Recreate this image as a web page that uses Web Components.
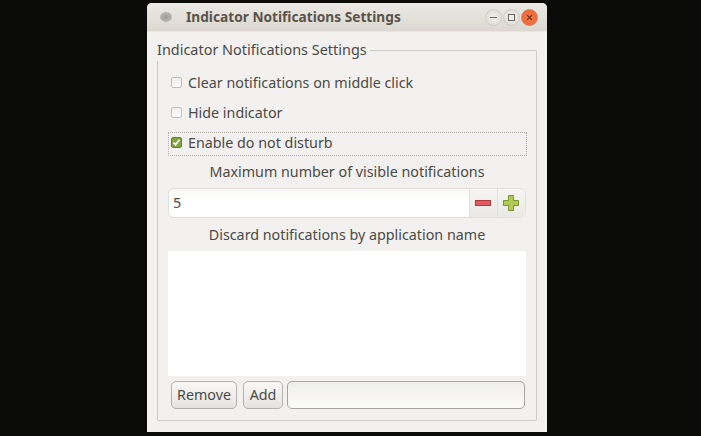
<!DOCTYPE html>
<html>
<head>
<meta charset="utf-8">
<title>Indicator Notifications Settings</title>
<style>
  html, body { margin: 0; height: 100%; overflow: hidden; }
  body {
    background: #0b0b0a;
    font: 14.3px "Noto Sans", sans-serif;
    color: #4c4a45;
    display: flex;
    align-items: flex-start;
    padding: 3px 0 0 147px;
    box-sizing: border-box;
  }
</style>
</head>
<body>
<settings-window heading="Indicator Notifications Settings">
  <group-frame label="Indicator Notifications Settings">
    <check-row>Clear notifications on middle click</check-row>
    <check-row>Hide indicator</check-row>
    <check-row checked focused>Enable do not disturb</check-row>
    <center-label>Maximum number of visible notifications</center-label>
    <spin-entry value="5"></spin-entry>
    <center-label>Discard notifications by application name</center-label>
    <app-list></app-list>
    <action-row></action-row>
  </group-frame>
</settings-window>

<script>
class SettingsWindow extends HTMLElement {
  constructor() {
    super();
    this.attachShadow({ mode: "open" });
    this.shadowRoot.innerHTML = `
      <style>
        :host { display: flex; flex-direction: column; width: 400px; height: 429px;
          background: #f2f1ef; border-radius: 5px 5px 0 0; overflow: hidden; }
        .bar { display: flex; align-items: center; height: 28px; flex: none;
          background: linear-gradient(#ece9e5, #dcd8d1); border-bottom: 1px solid #e8e6e2; }
        .menu { width: 12px; height: 10px; margin: 0 14px 0 13px; border-radius: 50%;
          background: radial-gradient(#a09d98, #c4c1bc); }
        .title { flex: 1; font-weight: 700; font-size: 13.7px; color: #5a534a; padding-bottom: 2px; }
        .btns { display: flex; gap: 1px; margin-right: 9px; }
        .btn { width: 17px; height: 17px; border-radius: 50%; display: flex; align-items: center; justify-content: center;
          border: 1px solid #cfcbc5; box-sizing: border-box; background: radial-gradient(#f1efec, #ddd9d4); }
        .btn.close { background: radial-gradient(#f47d4d, #e9612f); border-color: #d9825f; }
        .btn svg { display: block; }
        .body { flex: 1; display: flex; padding: 9px 10px 11px 10px; min-height: 0; }
      </style>
      <div class="bar">
        <span class="menu"></span>
        <span class="title"></span>
        <div class="btns">
          <span class="btn"><svg width="9" height="9"><path d="M1 4.5h7" stroke="#6b665f" stroke-width="1"/></svg></span>
          <span class="btn"><svg width="9" height="9"><rect x="1.5" y="1.5" width="6" height="6" fill="none" stroke="#6b665f"/></svg></span>
          <span class="btn close"><svg width="9" height="9"><path d="M2 2l5 5M7 2l-5 5" stroke="#7a3015" stroke-width="1.1"/></svg></span>
        </div>
      </div>
      <div class="body"><slot></slot></div>`;
    this.shadowRoot.querySelector(".title").textContent = this.getAttribute("heading");
  }
}
customElements.define("settings-window", SettingsWindow);

class GroupFrame extends HTMLElement {
  constructor() {
    super();
    this.attachShadow({ mode: "open" });
    this.shadowRoot.innerHTML = `
      <style>
        :host { display: flex; flex-direction: column; flex: 1; min-width: 0; }
        .head { display: flex; height: 20px; flex: none; }
        .label { font-size: 14.45px; line-height: 18px; padding-right: 3px; white-space: nowrap; }
        .line { flex: 1; margin-top: 9px; border: 1px solid #cdcbc6; border-bottom: 0; border-left: 0; border-radius: 0 2px 0 0; }
        .inner { flex: 1; display: flex; flex-direction: column; min-height: 0;
          border: 1px solid #cdcbc6; border-top: 0; border-radius: 0 0 2px 2px;
          padding: 11px 10px 11px 10px; }
      </style>
      <div class="head"><span class="label"></span><span class="line"></span></div>
      <div class="inner"><slot></slot></div>`;
    this.shadowRoot.querySelector(".label").textContent = this.getAttribute("label");
  }
}
customElements.define("group-frame", GroupFrame);

class CheckRow extends HTMLElement {
  constructor() {
    super();
    this.attachShadow({ mode: "open" });
    this.shadowRoot.innerHTML = `
      <style>
        :host { display: flex; align-items: center; height: 24px; margin-bottom: 6px; gap: 6px;
          padding: 0 0 3px 2px; border: 1px dotted transparent; box-sizing: border-box; margin-right: -1px; white-space: nowrap; }
        :host([focused]) { border-color: #b4b2a8; margin-bottom: 5px; }
        .box { width: 11px; height: 11px; flex: none; box-sizing: border-box; border: 1px solid #c3c0ba; border-radius: 2px;
          background: linear-gradient(#f0efed, #fcfcfb); display: flex; align-items: center; justify-content: center; }
        :host([checked]) .box { background: #7fa43c; border-color: #63842c; }
        svg { display: none; }
        :host([checked]) svg { display: block; }
      </style>
      <span class="box"><svg width="9" height="9"><path d="M1.5 4.5l2 2.2 4-5" fill="none" stroke="#fff" stroke-width="1.8"/></svg></span>
      <span><slot></slot></span>`;
  }
}
customElements.define("check-row", CheckRow);

class CenterLabel extends HTMLElement {
  constructor() {
    super();
    this.attachShadow({ mode: "open" });
    this.shadowRoot.innerHTML = `
      <style>
        :host { display: block; text-align: center; line-height: 22px; height: 20px; white-space: nowrap; margin-bottom: 7px; }
      </style>
      <slot></slot>`;
  }
}
customElements.define("center-label", CenterLabel);

class SpinEntry extends HTMLElement {
  constructor() {
    super();
    this.attachShadow({ mode: "open" });
    this.shadowRoot.innerHTML = `
      <style>
        :host { display: flex; height: 30px; margin-bottom: 6px; box-sizing: border-box;
          border: 1px solid #e2e0dc; border-radius: 6px; overflow: hidden; flex: none; }
        .val { flex: 1; background: linear-gradient(#f8f8f7, #fff 40%); padding-left: 4px; line-height: 27px; }
        .step { width: 28px; display: flex; align-items: center; justify-content: center; padding-right: 2px;
          background: linear-gradient(#f6f5f3, #ebe9e6); border-left: 1px solid #e2e0dc; box-sizing: border-box; }
        svg { display: block; }
      </style>
      <div class="val"></div>
      <div class="step"><svg width="16" height="6"><rect x=".5" y=".5" width="15" height="5" fill="#e05a5e" stroke="#b23a3e"/></svg></div>
      <div class="step"><svg width="16" height="16"><path d="M5.5.5h5v5h5v5h-5v5h-5v-5h-5v-5h5z" fill="#b0cb55" stroke="#7d9430"/></svg></div>`;
    this.shadowRoot.querySelector(".val").textContent = this.getAttribute("value");
  }
}
customElements.define("spin-entry", SpinEntry);

class AppList extends HTMLElement {
  constructor() {
    super();
    this.attachShadow({ mode: "open" });
    this.shadowRoot.innerHTML = `
      <style>:host { display: block; flex: 1; min-height: 0; background: #fff; }</style>`;
  }
}
customElements.define("app-list", AppList);

class ActionRow extends HTMLElement {
  constructor() {
    super();
    this.attachShadow({ mode: "open" });
    this.shadowRoot.innerHTML = `
      <style>
        :host { display: flex; height: 28px; margin: 5px 1px 0 3px; gap: 6px; flex: none; }
        .b { display: flex; align-items: center; justify-content: center; padding-bottom: 2px; box-sizing: border-box;
          border: 1px solid #b5b2ac; border-radius: 5px; background: linear-gradient(#f9f8f7, #e6e4e1); }
        .remove { width: 66px; }
        .add { width: 40px; margin-right: -2px; }
        .entry { flex: 1; border: 1px solid #a9a6a0; border-radius: 5px; background: linear-gradient(#f0efed, #fbfbfa); }
      </style>
      <div class="b remove">Remove</div>
      <div class="b add">Add</div>
      <div class="entry"></div>`;
  }
}
customElements.define("action-row", ActionRow);
</script>
</body>
</html>
